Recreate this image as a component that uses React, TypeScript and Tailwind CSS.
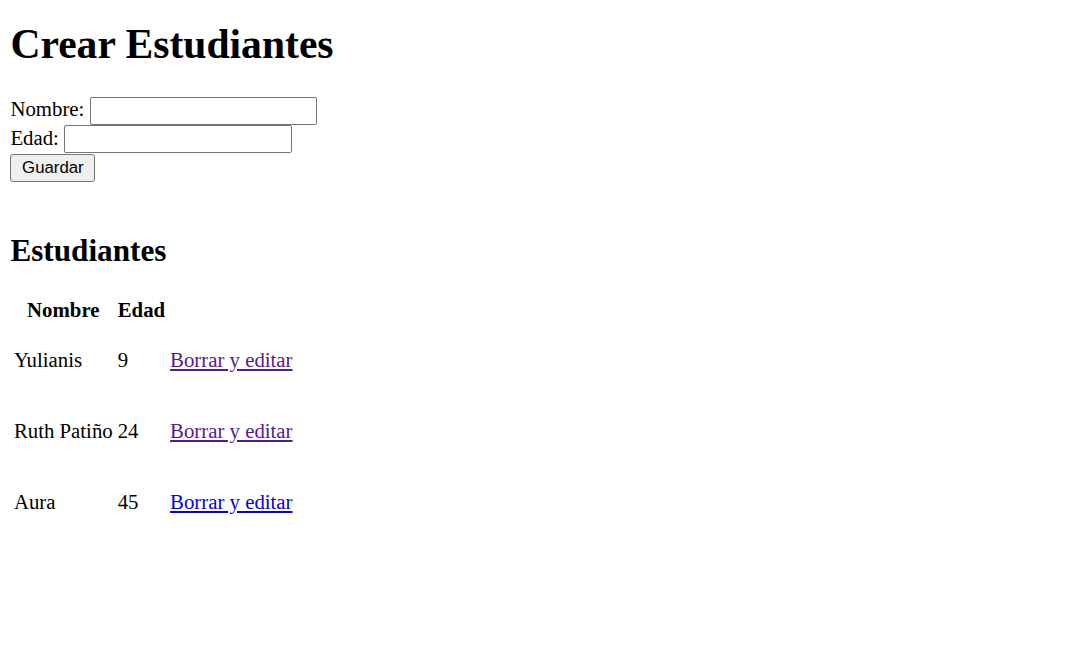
import React from "react";

// lista fija de estudiantes, como en la captura
const estudiantes = [
  { nombre: "Yulianis", edad: 9, visitado: true },
  { nombre: "Ruth Patiño", edad: 24, visitado: true },
  { nombre: "Aura", edad: 45, visitado: false },
];

export default function App() {
  return (
    <div className="m-[10.4px] font-['Liberation_Serif',serif] text-[20.8px] text-black">
      <h1 className="mt-[20px] mb-[28px] text-[41.6px] leading-[48px] font-bold">Crear Estudiantes</h1>

      {/* Formulario */}
      <form onSubmit={(e) => e.preventDefault()}>
        <div className="flex h-[29px] items-center">
          <label className="mb-[3px]">Nombre:</label>
          <input
            type="text"
            className="ml-[6px] h-[28px] w-[227px] rounded-[2px] border border-[#767676] bg-white px-[2px]"
          />
        </div>
        <div className="flex h-[28px] items-center">
          <label className="mb-[2px]">Edad:</label>
          <input
            type="text"
            className="ml-[5px] h-[28px] w-[228px] rounded-[2px] border border-[#767676] bg-white px-[2px]"
          />
        </div>
        <div className="flex h-[29px] items-center">
          <button
            type="submit"
            className="h-[28px] w-[85px] rounded-[3px] border border-[#767676] bg-[#efefef] pt-[2px] font-['Liberation_Sans',Arial,sans-serif] text-[16.8px] leading-none text-black"
          >
            Guardar
          </button>
        </div>
      </form>

      {/* Tabla */}
      <h2 className="mt-[51px] mb-[22px] text-[31.2px] leading-[36px] font-bold">Estudiantes</h2>
      <table className="border-separate border-spacing-[2.6px]">
        <thead>
          <tr className="h-[28px]">
            <th className="px-[1.5px] py-[1.3px] text-center align-middle font-bold">Nombre</th>
            <th className="px-[1.5px] py-[1.3px] text-center align-middle font-bold">Edad</th>
          </tr>
        </thead>
        <tbody>
          {estudiantes.map((e) => (
            <tr key={e.nombre} className="h-[69px]">
              <td className="px-[1.5px] pt-[1.3px] pb-[9.3px] align-middle">{e.nombre}</td>
              <td className="px-[1.5px] pt-[1.3px] pb-[9.3px] align-middle">{e.edad}</td>
              <td className="px-[1.5px] pt-[1.3px] pb-[9.3px] align-middle">
                <a
                  href="#"
                  className={e.visitado ? "text-[#551a8b] underline" : "text-[#0000ee] underline"}
                >
                  Borrar y editar
                </a>
              </td>
            </tr>
          ))}
        </tbody>
      </table>
    </div>
  );
}
